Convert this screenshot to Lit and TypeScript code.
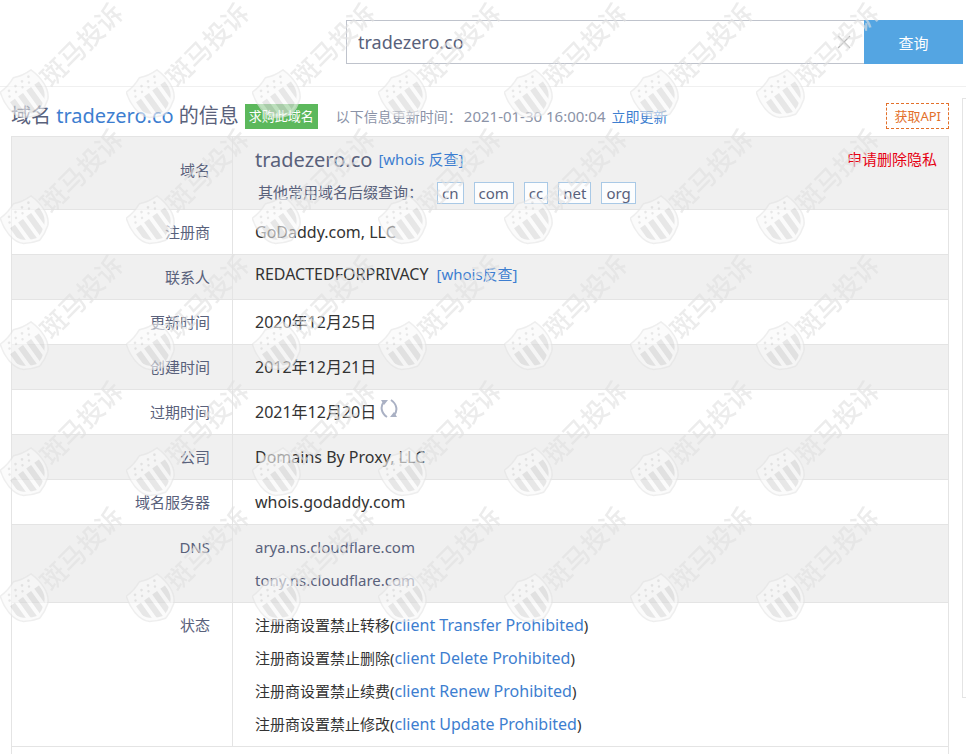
import { LitElement, html, css, svg, type TemplateResult } from "lit";
import { customElement, property } from "lit/decorators.js";

const SUFFIXES = ["cn", "com", "cc", "net", "org"];

const STATUSES = [
  ["注册商设置禁止转移", "client Transfer Prohibited"],
  ["注册商设置禁止删除", "client Delete Prohibited"],
  ["注册商设置禁止续费", "client Renew Prohibited"],
  ["注册商设置禁止修改", "client Update Prohibited"],
];

/* Repeating shield-and-name watermark laid over the page. */
@customElement("brand-watermark")
export class BrandWatermark extends LitElement {
  static styles = css`
    :host { display: block; pointer-events: none; }
    svg { display: block; }
    .name { font: 500 26px "Noto Sans CJK SC", sans-serif; fill: #e0e0e0; }
  `;

  render() {
    const stars = [0, 1, 2, 3].map((i) => svg`
      <circle cx=${-11 + i * 8} cy="-12" r="1.3"></circle>
      <circle cx=${-14 + i * 8} cy="-7" r="1.2"></circle>`);
    return html`
      <svg width="882" height="630" aria-hidden="true">
        <defs>
          <clipPath id="body">
            <path d="M-16-14Q-8-14 0-17Q8-14 16-14C20-4 20 9 13 15Q7 20 0 22Q-7 20-13 15C-20 9-20-4-16-14Z"></path>
          </clipPath>
          <pattern id="mark" width="126" height="126" patternUnits="userSpaceOnUse">
            <g opacity="0.62">
              <g transform="translate(25 94) rotate(-36)">
                <path d="M-19-16Q-9-16 0-20Q9-16 19-16C23-4 23 11 15 18Q8 23 0 25Q-8 23-15 18C-23 11-23-4-19-16Z"
                  fill="#f8f8f8" stroke="#e4e4e4" stroke-width="1.5"></path>
                <g fill="#d8d8d8" clip-path="url(#body)">
                  ${stars}
                  <path d="M-17-2h6V24h-6ZM-7-2h6V24h-6ZM3-2h6V24h-6ZM13-2h6V24h-6Z"></path>
                </g>
              </g>
              <text class="name" transform="translate(26 94) rotate(-45)" x="22" y="14">斑马投诉</text>
            </g>
          </pattern>
        </defs>
        <rect width="882" height="630" fill="url(#mark)"></rect>
      </svg>`;
  }
}

@customElement("app-root")
export class AppRoot extends LitElement {
  @property() domain = "tradezero.co";

  static styles = css`
    :host {
      display: block;
      position: relative;
      height: 100vh;
      overflow: hidden;
      background: #fff;
      color: #333;
      font: 15px/33px "Noto Sans", "Noto Sans CJK SC", sans-serif;
    }
    * { box-sizing: border-box; }
    a { color: #3d7ed0; text-decoration: none; }
    button { font-family: inherit; cursor: pointer; }
    .search {
      display: flex;
      justify-content: flex-end;
      height: 87px;
      padding: 20px 3px 0 346px;
      border-bottom: 1px solid #f0f0f0;
    }
    .field {
      display: flex;
      flex: 1;
      align-items: center;
      height: 44px;
      border: 1px solid #bfc3cc;
      border-right: 0;
    }
    .query {
      flex: 1;
      min-width: 0;
      padding: 0 11px;
      border: 0;
      outline: 0;
      background: none;
      color: #59617b;
      font: 18px/40px "Noto Sans", sans-serif;
    }
    .clear {
      display: flex;
      margin-right: 12px;
      padding: 0;
      border: 0;
      background: none;
    }
    .submit {
      width: 99px;
      height: 44px;
      border: 0;
      background: #54a5e2;
      color: #fff;
      font-size: 15px;
    }
    .main { display: flex; gap: 13px; padding-left: 11px; }
    .content { flex: 1; min-width: 0; }
    .side {
      width: 4px;
      height: 600px;
      margin-top: 11px;
      border: 1px solid #e4e4e4;
      border-right: 0;
    }
    .head {
      display: flex;
      align-items: center;
      height: 49px;
      padding-top: 9px;
    }
    .title {
      margin: 0;
      color: #59617b;
      font-size: 20px;
      font-weight: 400;
      line-height: 28px;
    }
    .buy {
      height: 25px;
      margin-left: 6px;
      padding: 0 4px;
      border: 0;
      background: #5cb85c;
      color: #fff;
      font-size: 13px;
      line-height: 25px;
    }
    .updated {
      display: flex;
      align-items: baseline;
      margin-left: 18px;
      color: #8b93a7;
      font-size: 14px;
    }
    .updated time { margin: 0 6px 0 2px; font-size: 15px; }
    .api {
      margin-left: auto;
      padding: 0 7px;
      border: 1px dashed #e3702a;
      color: #e3702a;
      font-size: 13px;
      line-height: 24px;
    }
    .info {
      width: 100%;
      border-collapse: collapse;
      border: 1px solid #e4e4e4;
    }
    .info tr { border-top: 1px solid #e4e4e4; }
    .info tr:nth-child(odd) { background: #f0f0f0; }
    .info th, .info td { padding: 6px 22px 5px; text-align: left; }
    .info th {
      width: 221px;
      border-right: 1px solid #e4e4e4;
      color: #59617b;
      font-weight: 400;
      text-align: right;
      vertical-align: top;
    }
    .info .first th { padding: 0 22px 6px; vertical-align: middle; }
    .info .first td { padding: 6px 22px 0; }
    .info .contact td { padding: 3px 22px 8px; }
    .info .rest { height: 45px; border: 0; background: #fff; }
    .value { font-size: 16px; }
    .reverse { margin-left: 4px; font-size: 15px; }
    .name-row { display: flex; align-items: center; gap: 6px; }
    .domain { color: #59617b; font-size: 20px; }
    .remove { margin: 0 -11px 0 auto; color: #e60012; }
    .suffixes {
      display: flex;
      align-items: center;
      gap: 10px;
      padding-left: 3px;
      color: #59617b;
    }
    .hint { margin-right: 4px; }
    .suffix {
      padding: 0 4px;
      border: 1px solid #a9c9e6;
      background: #fcfdfe;
      color: #59617b;
      line-height: 20px;
    }
    .dns { color: #59617b; }
    .watermark { position: absolute; top: 0; left: 0; }
  `;

  private row(label: string, value: TemplateResult | string, kind = "") {
    return html`<tr class=${kind}>
      <th scope="row">${label}</th>
      <td>${value}</td>
    </tr>`;
  }

  private value(text: string, extra: TemplateResult | string = "") {
    return html`<span class="value">${text}</span> ${extra}`;
  }

  render() {
    return html`
      <form class="search" @submit=${(e: Event) => e.preventDefault()}>
        <div class="field">
          <input class="query" type="text" aria-label="域名" .value=${this.domain} />
          <button class="clear" type="button" aria-label="清除">
            <svg width="16" height="16" viewBox="0 0 16 16" stroke="#b8b8b8" stroke-width="1.3">
              <path d="M2 2 14 14M14 2 2 14"></path>
            </svg>
          </button>
        </div>
        <button class="submit" type="submit">查询</button>
      </form>

      <main class="main">
        <section class="content">
          <header class="head">
            <h1 class="title">域名 <a href="#">${this.domain}</a> 的信息</h1>
            <button class="buy" type="button">求购此域名</button>
            <span class="updated">以下信息更新时间：<time>2021-01-30 16:00:04</time><a href="#">立即更新</a></span>
            <a class="api" href="#">获取API</a>
          </header>
          <table class="info">
            <tbody>
              ${this.row("域名", html`
                <div class="name-row">
                  <span class="domain">${this.domain}</span>
                  <a href="#">[whois 反查]</a>
                  <a class="remove" href="#">申请删除隐私</a>
                </div>
                <div class="suffixes">
                  <span class="hint">其他常用域名后缀查询：</span>
                  ${SUFFIXES.map((s) => html`<a class="suffix" href="#">${s}</a>`)}
                </div>`, "first")}
              ${this.row("注册商", this.value("GoDaddy.com, LLC"))}
              ${this.row("联系人", this.value("REDACTEDFORPRIVACY", html`<a class="reverse" href="#">[whois反查]</a>`), "contact")}
              ${this.row("更新时间", this.value("2020年12月25日"))}
              ${this.row("创建时间", this.value("2012年12月21日"))}
              ${this.row("过期时间", this.value("2021年12月20日", html`
                <svg width="18" height="19" viewBox="0 0 18 19" fill="none" stroke="#aab1c4" stroke-width="2">
                  <path d="M4 3C0 7 1 14 7 18M14 16C18 12 17 5 11 1"></path>
                  <path d="M1 1h7L4 6zM17 18h-7l4-5z" fill="#aab1c4" stroke="none"></path>
                </svg>`))}
              ${this.row("公司", this.value("Domains By Proxy, LLC"))}
              ${this.row("域名服务器", this.value("whois.godaddy.com"))}
              ${this.row("DNS", html`
                <div class="dns">arya.ns.cloudflare.com</div>
                <div class="dns">tony.ns.cloudflare.com</div>`)}
              ${this.row("状态", html`${STATUSES.map(([text, code]) => html`
                <div>${text}(<a class="value" href="#">${code}</a>)</div>`)}`)}
              <tr><td class="rest" colspan="2"></td></tr>
            </tbody>
          </table>
        </section>
        <aside class="side"></aside>
      </main>
      <brand-watermark class="watermark"></brand-watermark>
    `;
  }
}
